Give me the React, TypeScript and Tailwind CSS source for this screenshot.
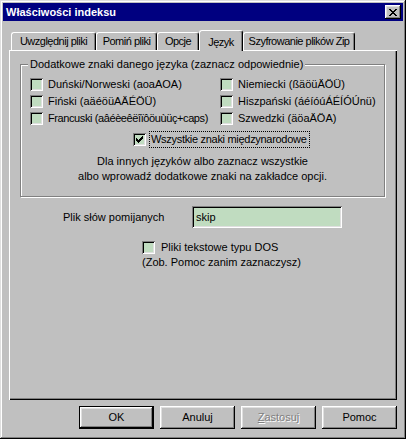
import React from "react";

const raised =
  "shadow-[inset_-1px_-1px_#000,inset_1px_1px_#fff,inset_-2px_-2px_#808080,inset_2px_2px_#dfdfdf]";
const sunken =
  "shadow-[inset_1px_1px_#808080,inset_-1px_-1px_#fff,inset_2px_2px_#000,inset_-2px_-2px_#dfdfdf]";

function Box({ checked = false }: { checked?: boolean }) {
  return (
    <div className={`w-[13px] h-[13px] shrink-0 bg-[#c0dcc0] flex items-center justify-center ${sunken}`}>
      {checked && (
        <svg width="7" height="7" viewBox="0 0 7 7" shapeRendering="crispEdges">
          <path d="M0 2h1v3H0zM1 3h1v3H1zM2 4h1v3H2zM3 3h1v3H3zM4 2h1v3H4zM5 1h1v3H5zM6 0h1v3H6z" fill="#000" />
        </svg>
      )}
    </div>
  );
}

function Check({ label, tight = false }: { label: string; tight?: boolean }) {
  return (
    <div className="flex items-center h-[17px] gap-[5px] whitespace-nowrap">
      <Box />
      <span className={tight ? "tracking-[-0.4px]" : ""}>{label}</span>
    </div>
  );
}

const tabs = [
  { label: "Uwzględnij pliki", w: "w-[85px]" },
  { label: "Pomiń pliki", w: "w-[61px]" },
  { label: "Opcje", w: "w-[42px]" },
  { label: "Język", w: "w-[44px]", active: true },
  { label: "Szyfrowanie plików Zip", w: "w-[112px]" },
];

export default function App() {
  return (
    <div
      className={`w-[406px] h-[439px] bg-[#c0c0c0] p-[3px] flex flex-col text-[11px] text-black font-['Liberation_Sans',Arial,sans-serif] shadow-[inset_-1px_-1px_#000,inset_1px_1px_#dfdfdf,inset_-2px_-2px_#808080,inset_2px_2px_#fff]`}
    >
      {/* title bar */}
      <div className="h-[18px] bg-[#000080] flex items-center justify-between pl-[3px] pr-[2px]">
        <span className="text-white font-bold text-[11px] leading-none">Właściwości indeksu</span>
        <div className={`w-[16px] h-[14px] bg-[#c0c0c0] flex items-center justify-center ${raised}`}>
          <svg width="8" height="7" viewBox="0 0 8 7" shapeRendering="crispEdges">
            <path
              d="M0 0h2v1H0zM6 0h2v1H6zM1 1h2v1H1zM5 1h2v1H5zM2 2h4v1H2zM3 3h2v1H3zM2 4h4v1H2zM1 5h2v1H1zM5 5h2v1H5zM0 6h2v1H0zM6 6h2v1H6z"
              fill="#000"
            />
          </svg>
        </div>
      </div>

      {/* tabs */}
      <div className="mt-[9px] ml-[8px] flex items-end h-[20px] tracking-[-0.5px]">
        {tabs.map((t) =>
          t.active ? (
            <div
              key={t.label}
              className={`${t.w} h-[21px] -mb-[1px] relative z-10 bg-[#c0c0c0] flex items-start pt-[3px] justify-center border-t border-l border-white border-r border-r-black rounded-t-[3px] shadow-[inset_-1px_0_#808080]`}
            >
              {t.label}
            </div>
          ) : (
            <div
              key={t.label}
              className={`${t.w} h-[18px] flex items-center justify-center border-t border-l border-white border-r border-r-black rounded-t-[3px] shadow-[inset_-1px_0_#808080] whitespace-nowrap`}
            >
              {t.label}
            </div>
          )
        )}
      </div>

      {/* panel */}
      <div className="mx-[6px] h-[350px] pt-[14px] shadow-[inset_1px_1px_#fff,inset_-1px_-1px_#000,inset_-2px_-2px_#808080]">
        <div className="ml-[11px] w-[365px] relative border border-[#808080] shadow-[1px_1px_0_#fff,inset_1px_1px_0_#fff] pt-[11px] pb-[12px]">
          <span className="absolute -top-[8px] left-[7px] px-[2px] bg-[#c0c0c0] leading-[14px] whitespace-nowrap">
            Dodatkowe znaki danego języka (zaznacz odpowiednie)
          </span>
          <div className="grid grid-cols-[190px_1fr] pl-[9px]">
            <Check label="Duński/Norweski (aoaAOA)" />
            <Check label="Niemiecki (ßäöüÄÖÜ)" />
            <Check label="Fiński (aäéöüAÄÉÖÜ)" />
            <Check label="Hiszpański (áéíóúÁÉÍÓÚnü)" />
            <Check label="Francuski (aâéèeêëîïôöuùüç+caps)" tight />
            <Check label="Szwedzki (äöaÄÖA)" />
          </div>
          <div className="mt-[4px] ml-[112px] flex items-center h-[17px] gap-[3px]">
            <Box checked />
            <span className="w-[161px] h-[17px] overflow-hidden whitespace-nowrap border border-dotted border-black px-[1px] leading-[15px] tracking-[-0.3px]">
              Wszystkie znaki międzynarodowe
            </span>
          </div>
          <div className="mt-[6px] text-center leading-[15px]">
            <p>Dla innych języków albo zaznacz wszystkie</p>
            <p>albo wprowadź dodatkowe znaki na zakładce opcji.</p>
          </div>
        </div>

        <div className="mt-[9px] ml-[54px] flex items-center h-[22px]">
          <span className="w-[129px]">Plik słów pomijanych</span>
          <div className={`w-[150px] h-[22px] bg-[#c0dcc0] flex items-center px-[4px] ${sunken}`}>skip</div>
        </div>

        <div className="mt-[12px] ml-[133px] flex items-center h-[15px] gap-[6px]">
          <Box />
          <span>Pliki tekstowe typu DOS</span>
        </div>
        <p className="ml-[133px] leading-[14px]">(Zob. Pomoc zanim zaznaczysz)</p>
      </div>

      {/* buttons */}
      <div className="mt-[6px] flex justify-end gap-[6px] pr-[6px]">
        <button
          className={`w-[75px] h-[23px] border border-black shadow-[inset_-1px_-1px_#000,inset_1px_1px_#fff,inset_-2px_-2px_#808080,inset_2px_2px_#dfdfdf] bg-[#c0c0c0]`}
        >
          OK
        </button>
        <button className={`w-[75px] h-[23px] bg-[#c0c0c0] ${raised}`}>Anuluj</button>
        <button className={`w-[75px] h-[23px] bg-[#c0c0c0] text-[#808080] [text-shadow:1px_1px_0_#fff] ${raised}`}>
          <span className="underline">Z</span>astosuj
        </button>
        <button className={`w-[75px] h-[23px] bg-[#c0c0c0] ${raised}`}>Pomoc</button>
      </div>
    </div>
  );
}
